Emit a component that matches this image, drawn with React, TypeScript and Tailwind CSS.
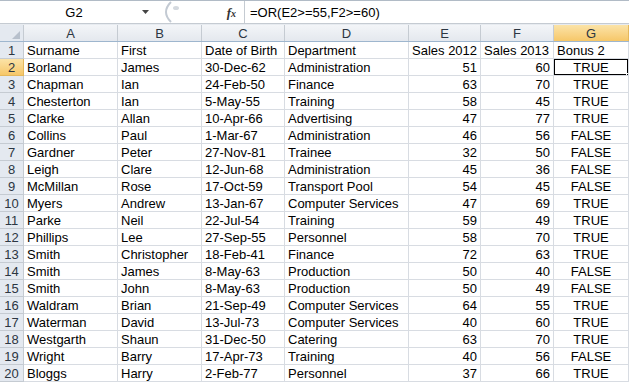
import React from 'react';

const cols = [
  { key: 'A', w: 'w-[94px]' },
  { key: 'B', w: 'w-[84px]' },
  { key: 'C', w: 'w-[83px]' },
  { key: 'D', w: 'w-[124px]' },
  { key: 'E', w: 'w-[72px]' },
  { key: 'F', w: 'w-[73px]' },
  { key: 'G', w: 'w-[75px]' },
];

const rows: [string, string, string, string, string, string, string][] = [
  ['Surname', 'First', 'Date of Birth', 'Department', 'Sales 2012', 'Sales 2013', 'Bonus 2'],
  ['Borland', 'James', '30-Dec-62', 'Administration', '51', '60', 'TRUE'],
  ['Chapman', 'Ian', '24-Feb-50', 'Finance', '63', '70', 'TRUE'],
  ['Chesterton', 'Ian', '5-May-55', 'Training', '58', '45', 'TRUE'],
  ['Clarke', 'Allan', '10-Apr-66', 'Advertising', '47', '77', 'TRUE'],
  ['Collins', 'Paul', '1-Mar-67', 'Administration', '46', '56', 'FALSE'],
  ['Gardner', 'Peter', '27-Nov-81', 'Trainee', '32', '50', 'FALSE'],
  ['Leigh', 'Clare', '12-Jun-68', 'Administration', '45', '36', 'FALSE'],
  ['McMillan', 'Rose', '17-Oct-59', 'Transport Pool', '54', '45', 'FALSE'],
  ['Myers', 'Andrew', '13-Jan-67', 'Computer Services', '47', '69', 'TRUE'],
  ['Parke', 'Neil', '22-Jul-54', 'Training', '59', '49', 'TRUE'],
  ['Phillips', 'Lee', '27-Sep-55', 'Personnel', '58', '70', 'TRUE'],
  ['Smith', 'Christopher', '18-Feb-41', 'Finance', '72', '63', 'TRUE'],
  ['Smith', 'James', '8-May-63', 'Production', '50', '40', 'FALSE'],
  ['Smith', 'John', '8-May-63', 'Production', '50', '49', 'FALSE'],
  ['Waldram', 'Brian', '21-Sep-49', 'Computer Services', '64', '55', 'TRUE'],
  ['Waterman', 'David', '13-Jul-73', 'Computer Services', '40', '60', 'TRUE'],
  ['Westgarth', 'Shaun', '31-Dec-50', 'Catering', '63', '70', 'TRUE'],
  ['Wright', 'Barry', '17-Apr-73', 'Training', '40', '56', 'FALSE'],
  ['Bloggs', 'Harry', '2-Feb-77', 'Personnel', '37', '66', 'TRUE'],
];

const FormulaBar = () => (
  <div className="flex h-[23px] border-t border-[#b1bbc6] bg-white">
    <div className="flex w-[158px] items-center">
      <span className="flex-1 pl-[6px] text-center">G2</span>
      <svg width="8" height="5" viewBox="0 0 8 5" className="mr-[8px]">
        <path d="M0 0h7L3.5 4z" fill="#444" />
      </svg>
    </div>
    <div className="flex w-[86px] items-center">
      <svg width="30" height="22" viewBox="0 0 30 22" className="ml-[1px]">
        <path d="M12 1 Q2 11 12 21" fill="none" stroke="#c3cad3" strokeWidth="2" />
        <ellipse cx="17" cy="7" rx="3" ry="2" fill="#d4d9df" />
      </svg>
      <span className="ml-auto mr-[8px] font-['Liberation_Serif'] text-[13px] font-bold italic text-[#333]">
        f<span className="text-[10px]">x</span>
      </span>
    </div>
    <div className="flex flex-1 items-center border-l border-[#c5cbd2] pl-[5px]">=OR(E2&gt;=55,F2&gt;=60)</div>
  </div>
);

const App = () => {
  return (
    <div className="h-[384px] w-[629px] overflow-hidden bg-white font-['Liberation_Sans',Arial,sans-serif] text-[13px] leading-none text-black">
      <FormulaBar />
      <div className="h-[2px] border-t border-[#c5cbd2] bg-[#e7ebf0]" />
      <div className="flex h-[17px] border-b border-[#9eb6ce]">
        <div className="relative w-[24px] border-r border-[#c5cbd2] bg-[#e4e9f0]">
          <svg width="8" height="8" viewBox="0 0 8 8" className="absolute bottom-[2px] right-[3px]">
            <path d="M8 0v8H0z" fill="#b7c0cc" />
          </svg>
        </div>
        {cols.map((c) => (
          <div
            key={c.key}
            className={`${c.w} flex items-center justify-center border-r text-[#2c3642] ${
              c.key === 'G'
                ? 'border-[#e5b85c] bg-gradient-to-b from-[#fbe3a7] to-[#f6c768]'
                : 'border-[#c5cbd2] bg-gradient-to-b from-[#f3f5f8] to-[#e4e8ee]'
            }`}
          >
            {c.key}
          </div>
        ))}
      </div>
      {rows.map((r, i) => {
        const n = i + 1;
        return (
          <div key={n} className="flex h-[17px]">
            <div
              className={`flex w-[24px] items-center justify-center border-b border-r text-[#2c3642] ${
                n === 2
                  ? 'border-[#e5b85c] bg-gradient-to-b from-[#fbe3a7] to-[#f6c768]'
                  : 'border-[#c5cbd2] bg-[#e4e9f0]'
              }`}
            >
              {n}
            </div>
            {r.map((v, j) => {
              const isNum = n > 1 && (j === 4 || j === 5);
              const isBool = n > 1 && j === 6;
              const sel = n === 2 && j === 6;
              return (
                <div
                  key={j}
                  className={`${cols[j].w} relative flex items-center overflow-hidden whitespace-nowrap border-b border-r border-[#d8dce2] px-[3px] ${
                    isNum ? 'justify-end' : isBool ? 'justify-center' : 'justify-start'
                  }`}
                >
                  {v}
                  {sel && (
                    <>
                      <div className="absolute inset-[-1px] border-2 border-black" />
                      <div className="absolute bottom-[-3px] right-[-3px] h-[5px] w-[5px] border border-white bg-black" />
                    </>
                  )}
                </div>
              );
            })}
          </div>
        );
      })}
    </div>
  );
};

export default App;
